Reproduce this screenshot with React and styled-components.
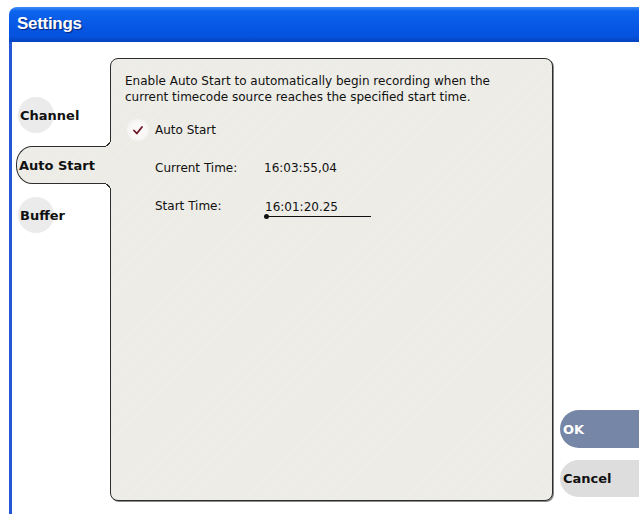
import React from 'react';
import styled, { createGlobalStyle, css } from 'styled-components';

const GlobalStyle = createGlobalStyle`
  html, body {
    margin: 0;
    padding: 0;
    background: #fff;
    overflow: hidden;
  }
  * {
    box-sizing: border-box;
  }
`;

const panelFill = css`
  background-color: #ecebe5;
  background-image: repeating-linear-gradient(
    135deg,
    rgba(255, 255, 255, 0.18) 0 1px,
    rgba(0, 0, 0, 0) 1px 3px
  );
`;

const Screen = styled.div`
  width: 639px;
  height: 514px;
  padding: 7px 0 0 9px;
`;

const Window = styled.div`
  display: flex;
  flex-direction: column;
  height: 100%;
`;

const TitleBar = styled.div`
  height: 35px;
  display: flex;
  align-items: center;
  padding: 0 0 2px 8px;
  border-top-left-radius: 8px;
  background: linear-gradient(
    180deg,
    #3c8cf7 0%,
    #0d64ec 12%,
    #0759e6 50%,
    #0552dd 85%,
    #0442bf 100%
  );
  color: #fff;
  font-family: 'Liberation Sans', Arial, sans-serif;
  font-weight: 700;
  font-size: 17px;
  letter-spacing: -0.3px;
  text-shadow: 1px 1px 1px rgba(0, 20, 90, 0.8);
`;

const Body = styled.div`
  flex: 1;
  display: flex;
  background: #fff;
  border-left: 3px solid #2457d6;
  padding: 16px 0 13px 0;
  font-family: 'DejaVu Sans', Verdana, sans-serif;
  color: #111;
`;

const TabList = styled.div`
  width: 98px;
  flex-shrink: 0;
  display: flex;
  flex-direction: column;
  gap: 12px;
  padding: 38px 0 0 4px;
`;

const Tab = styled.div`
  position: relative;
  height: 38px;
  display: flex;
  align-items: center;
  font-size: 13px;
  font-weight: 700;
  padding-left: 4px;

  &::before {
    content: '';
    position: absolute;
    left: 2px;
    top: 1px;
    width: 36px;
    height: 36px;
    border-radius: 50%;
    background: #ebebeb;
  }

  span {
    position: relative;
  }
`;

const ActiveTab = styled.div`
  position: relative;
  z-index: 1;
  height: 38px;
  margin-right: -1px;
  display: flex;
  align-items: center;
  padding-left: 2px;
  font-size: 13px;
  font-weight: 700;
  border: 1px solid #2e2e2e;
  border-right: none;
  border-radius: 16px 0 0 16px / 18px 0 0 18px;
  ${panelFill};

  &::before,
  &::after {
    content: '';
    position: absolute;
    right: 0;
    width: 8px;
    height: 8px;
  }

  &::before {
    top: -8px;
    background: radial-gradient(
      circle at 0 0,
      #fff 7px,
      #2e2e2e 7px,
      #2e2e2e 8px,
      #ecebe5 8px
    );
  }

  &::after {
    bottom: -8px;
    background: radial-gradient(
      circle at 0 100%,
      #fff 7px,
      #2e2e2e 7px,
      #2e2e2e 8px,
      #ecebe5 8px
    );
  }
`;

const Panel = styled.div`
  width: 443px;
  flex-shrink: 0;
  display: flex;
  flex-direction: column;
  padding: 14px 14px;
  border: 1px solid #2e2e2e;
  border-radius: 8px;
  box-shadow: 1px 1px 0 #8a8a8a;
  font-size: 12px;
  ${panelFill};
`;

const Intro = styled.p`
  margin: 0;
  line-height: 16px;
`;

const Fields = styled.div`
  display: flex;
  flex-direction: column;
  gap: 14px;
  margin-top: 13px;
`;

const CheckRow = styled.label`
  height: 24px;
  display: flex;
  align-items: center;
  gap: 6px;
  padding-left: 2px;
`;

const CheckMark = styled.span`
  width: 22px;
  height: 22px;
  border-radius: 50%;
  display: flex;
  align-items: center;
  justify-content: center;
  background: radial-gradient(circle, #fbf8f8 40%, #efeded 100%);
`;

const FieldRow = styled.div`
  height: 24px;
  display: flex;
  align-items: center;
  padding-left: 30px;
`;

const FieldLabel = styled.span`
  width: 109px;
`;

const TimeInput = styled.span`
  position: relative;
  width: 107px;
  line-height: 16px;
  padding: 3px 0 1px 1px;
  border-bottom: 1px solid #111;

  &::before {
    content: '';
    position: absolute;
    left: 0;
    bottom: -3px;
    width: 5px;
    height: 5px;
    border-radius: 50%;
    background: #111;
  }
`;

const Actions = styled.div`
  flex: 1;
  display: flex;
  flex-direction: column;
  justify-content: flex-end;
  gap: 12px;
  padding: 0 0 4px 7px;
`;

const ActionButton = styled.button`
  height: ${(p) => (p.$primary ? 38 : 37)}px;
  width: 100%;
  display: flex;
  align-items: center;
  padding: 0 0 0 3px;
  border: none;
  border-radius: 19px 0 0 19px;
  background: ${(p) => (p.$primary ? '#7586a6' : '#dddddd')};
  color: ${(p) => (p.$primary ? '#fff' : '#111')};
  font-family: 'DejaVu Sans', Verdana, sans-serif;
  font-size: 13px;
  font-weight: 700;
`;

const tabs = ['Channel', 'Auto Start', 'Buffer'];

export default function App() {
  return (
    <>
      <GlobalStyle />
      <Screen>
        <Window>
          <TitleBar>Settings</TitleBar>
          <Body>
            <TabList>
              {tabs.map((t) =>
                t === 'Auto Start' ? (
                  <ActiveTab key={t}>{t}</ActiveTab>
                ) : (
                  <Tab key={t}>
                    <span>{t}</span>
                  </Tab>
                )
              )}
            </TabList>
            <Panel>
              <Intro>
                Enable Auto Start to automatically begin recording when the
                <br />
                current timecode source reaches the specified start time.
              </Intro>
              <Fields>
                <CheckRow>
                  <CheckMark>
                    <svg width="10" height="9" viewBox="0 0 10 9">
                      <path
                        d="M1 4.5 L3.8 7.5 L9 1"
                        fill="none"
                        stroke="#6e1526"
                        strokeWidth="1.8"
                        strokeLinecap="round"
                        strokeLinejoin="round"
                      />
                    </svg>
                  </CheckMark>
                  Auto Start
                </CheckRow>
                <FieldRow>
                  <FieldLabel>Current Time:</FieldLabel>
                  <span>16:03:55,04</span>
                </FieldRow>
                <FieldRow>
                  <FieldLabel>Start Time:</FieldLabel>
                  <TimeInput>16:01:20.25</TimeInput>
                </FieldRow>
              </Fields>
            </Panel>
            <Actions>
              <ActionButton $primary>OK</ActionButton>
              <ActionButton>Cancel</ActionButton>
            </Actions>
          </Body>
        </Window>
      </Screen>
    </>
  );
}
